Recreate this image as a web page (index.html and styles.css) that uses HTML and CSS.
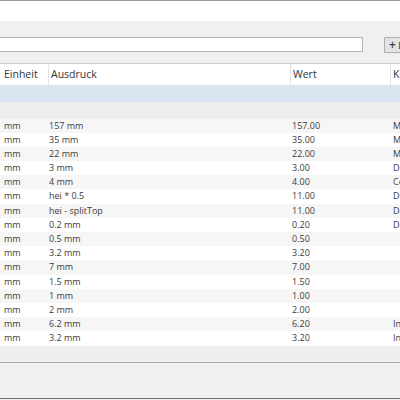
FILE: index.html
```html
<!DOCTYPE html>
<html lang="de">
<head>
<meta charset="utf-8">
<title>Parameter</title>
<link rel="stylesheet" href="styles.css">
</head>
<body>
<div class="page">
  <div class="topbar"></div>
  <div class="toolbar">
    <input class="filter" type="text" value="">
    <button class="add"><span class="plus">+</span> Einfügen</button>
  </div>
  <div class="table">
    <div class="row head">
      <div class="c c1">Einheit</div>
      <div class="c c2">Ausdruck</div>
      <div class="c c3">Wert</div>
      <div class="c c4">Kommentar</div>
    </div>
    <div class="row group blue"><div class="c c1"></div></div>
    <div class="row group gray"><div class="c c1"></div></div>
    <div class="row data odd"><div class="c c1">mm</div><div class="c c2">157 mm</div><div class="c c3">157.00</div><div class="c c4">Maß</div></div>
    <div class="row data"><div class="c c1">mm</div><div class="c c2">35 mm</div><div class="c c3">35.00</div><div class="c c4">Maß</div></div>
    <div class="row data odd"><div class="c c1">mm</div><div class="c c2">22 mm</div><div class="c c3">22.00</div><div class="c c4">Maß</div></div>
    <div class="row data"><div class="c c1">mm</div><div class="c c2">3 mm</div><div class="c c3">3.00</div><div class="c c4">Dorn</div></div>
    <div class="row data odd"><div class="c c1">mm</div><div class="c c2">4 mm</div><div class="c c3">4.00</div><div class="c c4">Code</div></div>
    <div class="row data"><div class="c c1">mm</div><div class="c c2">hei * 0.5</div><div class="c c3">11.00</div><div class="c c4">Deckel</div></div>
    <div class="row data odd"><div class="c c1">mm</div><div class="c c2">hei - splitTop</div><div class="c c3">11.00</div><div class="c c4">Dorn</div></div>
    <div class="row data"><div class="c c1">mm</div><div class="c c2">0.2 mm</div><div class="c c3">0.20</div><div class="c c4">Dorn</div></div>
    <div class="row data odd"><div class="c c1">mm</div><div class="c c2">0.5 mm</div><div class="c c3">0.50</div><div class="c c4"></div></div>
    <div class="row data"><div class="c c1">mm</div><div class="c c2">3.2 mm</div><div class="c c3">3.20</div><div class="c c4"></div></div>
    <div class="row data odd"><div class="c c1">mm</div><div class="c c2">7 mm</div><div class="c c3">7.00</div><div class="c c4"></div></div>
    <div class="row data"><div class="c c1">mm</div><div class="c c2">1.5 mm</div><div class="c c3">1.50</div><div class="c c4"></div></div>
    <div class="row data odd"><div class="c c1">mm</div><div class="c c2">1 mm</div><div class="c c3">1.00</div><div class="c c4"></div></div>
    <div class="row data"><div class="c c1">mm</div><div class="c c2">2 mm</div><div class="c c3">2.00</div><div class="c c4"></div></div>
    <div class="row data odd"><div class="c c1">mm</div><div class="c c2">6.2 mm</div><div class="c c3">6.20</div><div class="c c4">Innen</div></div>
    <div class="row data"><div class="c c1">mm</div><div class="c c2">3.2 mm</div><div class="c c3">3.20</div><div class="c c4">Innen</div></div>
    <div class="rest"></div>
  </div>
  <div class="footer"></div>
</div>
</body>
</html>
```

FILE: styles.css
```css
html, body {
  margin: 0;
  padding: 0;
  width: 400px;
  height: 400px;
  overflow: hidden;
  background: #f0f0f0;
}

.page {
  width: 400px;
  height: 400px;
  overflow: hidden;
  display: flex;
  flex-direction: column;
  font-family: "Open Sans", "Noto Sans", sans-serif;
  color: #3a3a3a;
}

.topbar {
  height: 20px;
  flex: none;
  background: #ffffff;
  border-top: 1px solid #9c9c9c;
}

.toolbar {
  height: 42px;
  flex: none;
  background: #f0f0f0;
  display: flex;
  align-items: flex-start;
  padding-top: 16px;
  box-sizing: border-box;
  gap: 21px;
}

.filter {
  flex: none;
  width: 368px;
  height: 15px;
  margin: 0 0 0 -5px;
  padding: 0;
  box-sizing: border-box;
  border: 1px solid #b4b4b4;
  background: #ffffff;
  outline: none;
}

.add {
  flex: none;
  height: 16px;
  margin: 0;
  padding: 0 4px;
  box-sizing: border-box;
  border: 1px solid #adadad;
  background: #e4e4e4;
  font-family: "Open Sans", sans-serif;
  font-size: 9px;
  line-height: 13px;
  color: #333;
  white-space: nowrap;
  border-radius: 1px;
}

.plus {
  font-size: 12px;
  font-weight: 600;
  color: #444;
}

.table {
  flex: none;
  width: 560px;
  border-top: 1px solid #cfcfcf;
  display: flex;
  flex-direction: column;
}

.row {
  display: grid;
  grid-template-columns: 48px 242px 100px 170px;
}

.c {
  white-space: nowrap;
  overflow: hidden;
}

.head {
  height: 21px;
  background: #ffffff;
  font-size: 10.5px;
  line-height: 21px;
  color: #333;
}

.head .c1 { padding-left: 4px; }
.head .c2, .head .c3, .head .c4 {
  border-left: 1px solid #e2e2e2;
  padding-left: 2px;
}

.group { height: 16.5px; }
.group.blue { background: #d8e5f0; }
.group.gray { background: #ededed; height: 17px; }

.data {
  height: 14.2px;
  background: #ffffff;
  font-size: 9px;
  line-height: 14.2px;
  color: #3c3c3c;
}

.data.odd { background: #f6f6f6; }

.data .c1 { padding-left: 4px; }
.data .c2 { padding-left: 1px; }
.data .c3 { padding-left: 2px; }
.data .c4 { padding-left: 3px; }

.rest {
  height: 16px;
  background: #efefef;
}

.footer {
  flex: none;
  height: 37px;
  box-sizing: border-box;
  background: #f0f0f0;
  border-top: 1px solid #aaaaaa;
  border-bottom: 1px solid #6f6f6f;
}
```
